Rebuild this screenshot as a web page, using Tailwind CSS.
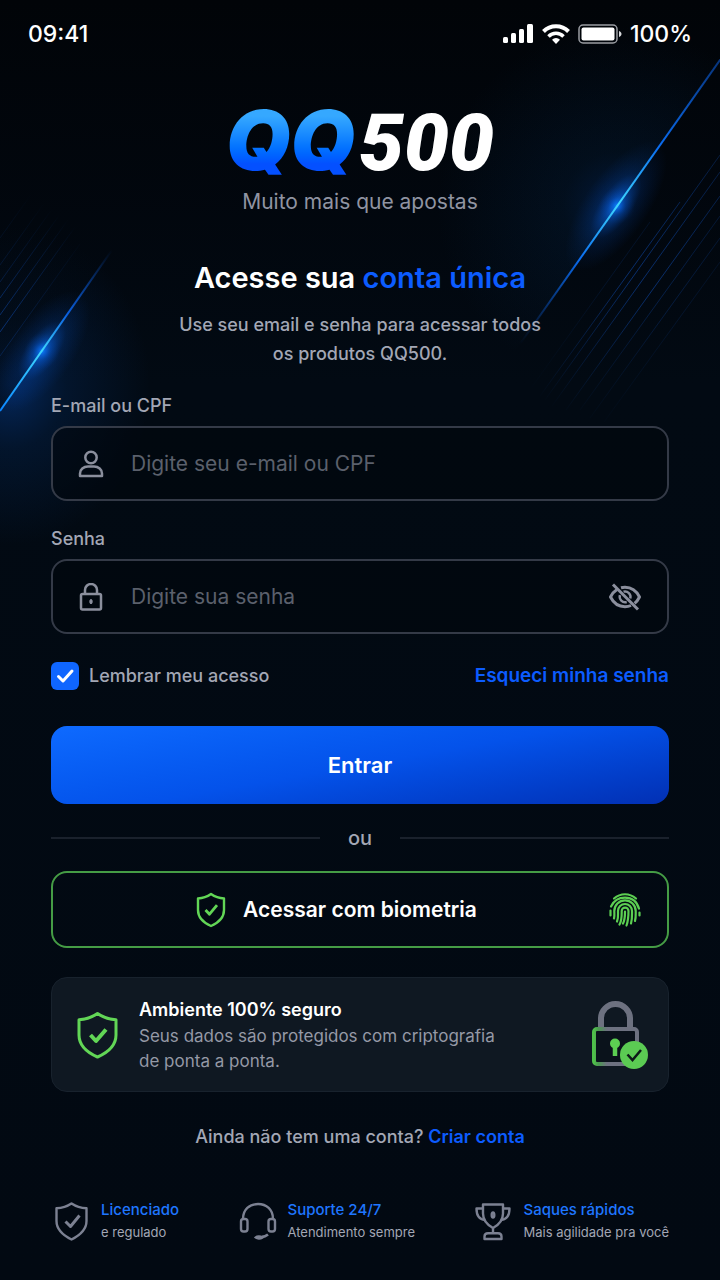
<!DOCTYPE html>
<html lang="pt-BR">
  <head>
    <meta charset="UTF-8" />
    <meta name="viewport" content="width=device-width, initial-scale=1.0" />
    <title>QQ500 - Entrar</title>
    <script src="https://cdn.jsdelivr.net/npm/@tailwindcss/browser@4"></script>
  </head>
  <body class="relative min-h-screen overflow-x-hidden bg-linear-to-b from-[#010408] via-[#020a13] via-30% to-[#020912] font-['Inter','Liberation_Sans',sans-serif] text-[#a3a7b5]">

    <!-- Background light streaks -->
    <svg class="absolute top-0 right-0 w-[360px] h-[480px] pointer-events-none" viewBox="360 0 360 480" fill="none" aria-hidden="true">
      <defs>
        <linearGradient id="streak-r" gradientUnits="userSpaceOnUse" x1="734" y1="40" x2="520" y2="344">
          <stop offset="0" stop-color="#0b4fc0" stop-opacity=".5" />
          <stop offset=".35" stop-color="#0a6cf0" />
          <stop offset=".54" stop-color="#3fd8ff" />
          <stop offset=".72" stop-color="#0a6cf0" />
          <stop offset="1" stop-color="#0b4fc0" stop-opacity="0" />
        </linearGradient>
        <linearGradient id="fine-r" gradientUnits="userSpaceOnUse" x1="720" y1="150" x2="540" y2="400">
          <stop offset="0" stop-color="#0d47a8" stop-opacity=".3" />
          <stop offset=".5" stop-color="#0d47a8" stop-opacity=".6" />
          <stop offset="1" stop-color="#0d47a8" stop-opacity="0" />
        </linearGradient>
        <radialGradient id="halo-r" gradientUnits="userSpaceOnUse" cx="0" cy="0" r="1" gradientTransform="translate(617 206) scale(180 180)">
          <stop offset="0" stop-color="#0640a0" stop-opacity=".35" />
          <stop offset=".3" stop-color="#05305c" stop-opacity=".2" />
          <stop offset="1" stop-color="#05305c" stop-opacity="0" />
        </radialGradient>
        <radialGradient id="flare">
          <stop offset="0" stop-color="#0f86ff" stop-opacity=".8" />
          <stop offset=".2" stop-color="#0766f0" stop-opacity=".5" />
          <stop offset=".5" stop-color="#0450c8" stop-opacity=".18" />
          <stop offset="1" stop-color="#0444b0" stop-opacity="0" />
        </radialGradient>
      </defs>
      <path d="M762 0 424 480H360V0Z" fill="url(#halo-r)" />
      <ellipse cx="616" cy="206" rx="76" ry="32" fill="url(#flare)" transform="rotate(-55 616 206)" />
      <circle cx="617" cy="206" r="18" fill="url(#flare)" />
      <path d="M734 40 520 344" stroke="url(#streak-r)" stroke-width="2" />
      <g stroke="url(#fine-r)" stroke-width="1">
        <path d="M680 202 540 396" />
        <path d="M720 155 545 400" />
        <path d="M720 172 552 406" />
        <path d="M720 196 566 410" />
        <path d="M720 216 580 410" opacity=".6" />
        <path d="M720 238 590 418" opacity=".5" />
        <path d="M720 262 604 422" opacity=".3" />
        <path d="M650 222 524 398" opacity=".3" />
      </g>
    </svg>
    <svg class="absolute top-0 left-0 w-[260px] h-[640px] pointer-events-none" viewBox="0 0 260 640" fill="none" aria-hidden="true">
      <defs>
        <linearGradient id="streak-l" gradientUnits="userSpaceOnUse" x1="0" y1="411" x2="112" y2="250">
          <stop offset="0" stop-color="#0a84ff" />
          <stop offset=".37" stop-color="#3fd8ff" />
          <stop offset=".6" stop-color="#0a5fe0" />
          <stop offset="1" stop-color="#0b4fc0" stop-opacity="0" />
        </linearGradient>
        <linearGradient id="fine-l" gradientUnits="userSpaceOnUse" x1="0" y1="330" x2="75" y2="225">
          <stop offset="0" stop-color="#0d47a8" stop-opacity=".6" />
          <stop offset="1" stop-color="#0d47a8" stop-opacity="0" />
        </linearGradient>
        <radialGradient id="halo-l" gradientUnits="userSpaceOnUse" cx="0" cy="0" r="1" gradientTransform="translate(10 385) scale(140 160)">
          <stop offset="0" stop-color="#0648b0" stop-opacity=".5" />
          <stop offset=".4" stop-color="#05306c" stop-opacity=".28" />
          <stop offset="1" stop-color="#05306c" stop-opacity="0" />
        </radialGradient>
      </defs>
      <path d="M0 411 140 210H260V640H0Z" fill="url(#halo-l)" />
      <path d="M0 411 140 210H0Z" fill="url(#halo-l)" opacity=".35" />
      <ellipse cx="42" cy="351" rx="70" ry="32" fill="url(#flare)" transform="rotate(-55 42 351)" />
      <circle cx="42" cy="351" r="18" fill="url(#flare)" />
      <path d="M0 411 112 250" stroke="url(#streak-l)" stroke-width="2" />
      <g stroke="url(#fine-l)" stroke-width="1">
        <path d="M0 238 40 182" opacity=".5" />
        <path d="M0 265 55 188" opacity=".6" />
        <path d="M0 282 62 195" opacity=".7" />
        <path d="M0 298 68 203" />
        <path d="M0 315 70 217" />
        <path d="M0 332 75 227" />
        <path d="M0 356 80 244" opacity=".5" />
      </g>
    </svg>

    <div class="relative">
      <!-- Status bar -->
      <header class="flex h-[68px] items-center justify-between px-7 text-[23px] font-medium text-white">
        <span>09:41</span>
        <div class="flex items-center gap-2">
          <svg class="h-5 w-8" viewBox="0 0 32 20" fill="currentColor" aria-hidden="true">
            <rect x="1" y="13" width="5" height="6" rx="1.500" />
            <rect x="9" y="9" width="5" height="10" rx="1.500" />
            <rect x="17" y="5" width="5" height="14" rx="1.500" />
            <rect x="25" y="0" width="6" height="19" rx="1.500" />
          </svg>
          <svg class="h-5 w-7" viewBox="0 0 28 20" fill="none" stroke="currentColor" stroke-width="4" aria-hidden="true">
            <path d="M1.500 7.500a17.500 17.500 0 0 1 25 0" />
            <path d="M6.500 12.500a10.500 10.500 0 0 1 15 0" stroke-width="3.500" />
            <path d="M14 20l-4-4.200a5.600 5.600 0 0 1 8 0Z" fill="currentColor" stroke="none" />
          </svg>
          <svg class="h-5 w-11" viewBox="0 0 44 20" fill="none" aria-hidden="true">
            <rect x="1" y="1" width="38" height="18" rx="4" stroke="#9a9da3" stroke-width="1.500" />
            <rect x="3.500" y="3.500" width="33" height="13" rx="2" fill="#fff" />
            <path d="M41 7c1.500.6 2.500 1.600 2.500 3s-1 2.400-2.500 3Z" fill="#d5d7da" />
          </svg>
          <span>100%</span>
        </div>
      </header>

      <main class="px-[51px] pb-9">
        <!-- Brand -->
        <div class="mt-8 text-center">
          <div class="flex h-20 items-baseline justify-center leading-20 font-black italic">
            <span class="bg-linear-to-b from-[#35a8ff] from-20% to-[#0450ff] to-80% bg-clip-text pr-1 text-[83px] text-transparent">QQ</span>
            <span class="font-['Roboto','Liberation_Sans',sans-serif] text-[80px] text-white">500</span>
          </div>
          <p class="mt-2 text-[21px] leading-7 text-[#9094a2]">Muito mais que apostas</p>
        </div>

        <div class="mt-[42px] text-center">
          <h1 class="text-[29px] leading-10 font-semibold text-white">Acesse sua <span class="text-[#0c5cff]">conta única</span></h1>
          <p class="mx-auto mt-3 max-w-[376px] text-lg leading-[29px] font-medium">Use seu email e senha para acessar todos os produtos QQ500.</p>
        </div>

        <form id="login-form" class="mt-[26px]">
          <label for="login" class="block text-lg leading-6 font-medium">E-mail ou CPF</label>
          <div class="mt-2 flex h-[75px] items-center rounded-2xl border-2 border-[#343a47] bg-[#02070e]/60 px-6">
            <svg class="size-7 shrink-0" viewBox="0 0 28 28" fill="none" stroke="#8b8f9d" stroke-width="2.500" stroke-linejoin="round" aria-hidden="true">
              <circle cx="14" cy="7.500" r="5.700" />
              <path d="M3 26v-2.500c0-4 3.500-7 8-7h6c4.500 0 8 3 8 7V26Z" />
            </svg>
            <input type="text" id="login" name="login" placeholder="Digite seu e-mail ou CPF" class="ml-[26px] h-full min-w-0 flex-1 bg-transparent text-[21px] text-white outline-none placeholder:text-[#5b606c]" />
          </div>

          <label for="senha" class="mt-[26px] block text-lg leading-6 font-medium">Senha</label>
          <div class="mt-2 flex h-[75px] items-center rounded-2xl border-2 border-[#343a47] bg-[#02070e]/60 px-6">
            <svg class="size-7 shrink-0" viewBox="0 0 28 28" fill="none" stroke="#8b8f9d" stroke-width="2.500" stroke-linejoin="round" aria-hidden="true">
              <rect x="4" y="11" width="20" height="15.500" rx="1.500" />
              <path d="M8 11V7a6 6 0 0 1 12 0v4" />
              <ellipse cx="14" cy="18.600" rx="1.200" ry="2.200" fill="#8b8f9d" stroke-width="1" />
            </svg>
            <input type="password" id="senha" name="senha" placeholder="Digite sua senha" class="ml-[26px] h-full min-w-0 flex-1 bg-transparent text-[21px] text-white outline-none placeholder:text-[#5b606c]" />
            <button type="button" id="toggle-senha" aria-label="Mostrar senha" class="mr-0.5 cursor-pointer">
              <svg class="h-7 w-8" viewBox="0 0 32 28" fill="none" stroke="#8b8f9d" stroke-width="3" aria-hidden="true">
                <path d="M12 4.800a15 15 0 0 1 4-.5c6.500 0 11.500 3.700 14.500 9.700-1.300 2.600-2.900 4.700-4.900 6.300" />
                <path d="M8 6.500C5.300 8.200 3.100 10.700 1.500 14c3 6 8 9.700 14.500 9.700 2.200 0 4.200-.4 6-1.200" />
                <path d="M14.500 8.700a5.500 5.500 0 0 1 6.800 6.800M10.900 12.200a5.500 5.500 0 0 0 6.800 6.800" stroke-width="2.400" />
                <path d="m4 1.500 25 25" />
              </svg>
            </button>
          </div>

          <div class="mt-7 flex items-center justify-between">
            <label for="lembrar" class="flex cursor-pointer items-center gap-2.5 text-lg leading-7 font-medium">
              <span class="grid size-7 place-items-center">
                <input type="checkbox" id="lembrar" name="lembrar" checked class="peer col-start-1 row-start-1 size-7 appearance-none rounded-md border-2 border-[#343a47] checked:border-0 checked:bg-[#0f66ff]" />
                <svg class="pointer-events-none col-start-1 row-start-1 hidden size-7 peer-checked:block" viewBox="0 0 28 28" fill="none" stroke="#fff" stroke-width="3" stroke-linecap="round" stroke-linejoin="round" aria-hidden="true">
                  <path d="m7.500 14.500 4.500 4.500 9-10" />
                </svg>
              </span>
              Lembrar meu acesso
            </label>
            <a href="#" class="text-[19px] leading-7 font-semibold text-[#0c5cff]">Esqueci minha senha</a>
          </div>

          <button type="submit" class="mt-9 h-[78px] w-full cursor-pointer rounded-2xl bg-linear-170 from-[#0e6aff] via-[#0452ea] to-[#0230b4] text-[22px] font-semibold text-white">Entrar</button>
        </form>

        <div class="mt-[22px] flex items-center gap-7 text-xl leading-6 font-medium">
          <span class="h-0.5 flex-1 bg-[#1a212c]"></span>
          ou
          <span class="h-0.5 flex-1 bg-[#1a212c]"></span>
        </div>

        <button type="button" class="mt-[21px] flex h-[77px] w-full cursor-pointer items-center justify-between rounded-2xl border-2 border-[#459c45] pr-[26px] pl-6 text-[21px] font-semibold text-white">
          <span class="flex flex-1 items-center justify-center gap-4 pr-3.5">
            <svg class="h-9 w-8" viewBox="0 0 32 36" fill="none" stroke="#62d656" stroke-width="2.400" stroke-linejoin="round" aria-hidden="true">
              <path d="M16 2c4 2.800 8 4.200 13 4.500V18c0 7-5 12.500-13 16C8 30.500 3 25 3 18V6.500C8 6.200 12 4.800 16 2Z" />
              <path d="m10.500 18 4 4.200 7.500-9" stroke-width="2.800" />
            </svg>
            Acessar com biometria
          </span>
          <svg class="h-9 w-8" viewBox="0 0 32 36" fill="none" stroke="#5ccf52" stroke-width="2.200" stroke-linecap="round" aria-hidden="true">
            <path d="M5 6.500C11.500.8 20.500.8 27 6.500" />
            <path d="M2 14.500C5 8 10 5.600 16 5.600c7 0 12 4 14 11" />
            <path d="M1.500 18.500v5M30.500 20.500v3" />
            <path d="M5 26.500c.7-3 .3-5 .3-7.500A10.700 10.700 0 0 1 26.700 19c0 4 .3 6-.7 10" />
            <path d="M8 29.500c1.500-3.500 1-7 1-10.500a7 7 0 0 1 14 0c0 5 .3 8-1 12.500" />
            <path d="M10.500 32.500c2.500-4 2.200-9 2.200-13.500a3.400 3.400 0 0 1 6.800 0c0 5-.2 9.500-2 14.500" />
            <path d="M16 19.500c0 5 0 8.500-2 12" />
          </svg>
        </button>

        <!-- Security notice -->
        <section class="mt-[29px] flex h-[115px] items-center rounded-2xl border border-[#18222d] bg-[#0f1822] pr-5 pl-6">
          <svg class="h-12 w-11 shrink-0" viewBox="0 0 44 48" fill="none" stroke="#62d656" stroke-width="3" stroke-linejoin="round" aria-hidden="true">
            <path d="M21.500 2.500c5.500 3.800 11 5.800 18.500 6.200V24c0 9.500-7 17-18.500 22C10 41 3 33.500 3 24V8.700c7.500-.4 13-2.400 18.500-6.200Z" />
            <path d="m14.500 24 5.500 6 10-11.500" stroke-width="4" />
          </svg>
          <div class="ml-[19px] flex-1 text-[17px] leading-[25px] text-[#9599a6]">
            <h2 class="text-lg leading-7 font-semibold text-white">Ambiente 100% seguro</h2>
            <p class="max-w-[380px]">Seus dados são protegidos com criptografia de ponta a ponta.</p>
          </div>
          <svg class="h-[68px] w-14 shrink-0" viewBox="0 0 56 68" fill="none" aria-hidden="true">
            <defs>
              <linearGradient id="lock-body" x1="0" y1="0" x2="1" y2="0">
                <stop offset="0" stop-color="#4fc04a" />
                <stop offset=".1" stop-color="#4a9a50" />
                <stop offset=".3" stop-color="#6d7180" />
                <stop offset="1" stop-color="#6d7180" />
              </linearGradient>
            </defs>
            <path d="M9 27V17.500a14.500 14.500 0 0 1 29 0V27" stroke="#6d7180" stroke-width="6" />
            <rect x="2" y="28" width="43" height="35" rx="3" fill="#0a121b" stroke="url(#lock-body)" stroke-width="4" />
            <circle cx="23" cy="42.500" r="5" fill="#5ccf52" />
            <path d="M23 43v12" stroke="#5ccf52" stroke-width="4.500" />
            <circle cx="42" cy="54" r="14" fill="#5bcb53" />
            <path d="m35.500 53.500 5 5.500 8.500-10" stroke="#0d1a18" stroke-width="2.500" />
          </svg>
        </section>

        <p class="mt-[31px] text-center text-lg leading-7 font-medium">Ainda não tem uma conta? <a href="#" class="font-semibold text-[#0c5cff]">Criar conta</a></p>

        <!-- Highlights -->
        <ul class="mt-12 flex justify-between text-[13px] leading-[22px]">
          <li class="flex items-center gap-2.5">
            <svg class="size-10" viewBox="0 0 40 40" fill="none" stroke="#7c8192" stroke-width="2.400" stroke-linejoin="round" aria-hidden="true">
              <path d="M20.500 2.500c4.500 3 9.500 4.500 15 4.800V20c0 8-6 14-15 18.500C11.500 34 5.500 28 5.500 20V7.300c5.500-.3 10.500-1.800 15-4.800Z" />
              <path d="m14.500 20.500 5 5 9-11" stroke-width="3" />
            </svg>
            <div>
              <h3 class="text-[15px] leading-[22px] font-medium text-[#1f76ff]">Licenciado</h3>
              <p>e regulado</p>
            </div>
          </li>
          <li class="flex items-center gap-2.5">
            <svg class="size-10" viewBox="0 0 40 40" fill="none" stroke="#7c8192" stroke-width="2.400" aria-hidden="true">
              <path d="M5 18C5 8.500 11.500 3 20 3s15 5.500 15 15" />
              <rect x="3" y="18" width="6.500" height="12.500" rx="2.500" />
              <rect x="30.500" y="18" width="6.500" height="12.500" rx="2.500" />
              <path d="M30 33.500c-2 1.500-3.500 2.300-6 2.500M18 36.500c1.500-1.500 4.500-1 6 0-1.500 1-4.500 1.200-6 0Z" stroke-width="2.800" />
            </svg>
            <div>
              <h3 class="text-[15px] leading-[22px] font-medium text-[#1f76ff]">Suporte 24/7</h3>
              <p>Atendimento sempre</p>
            </div>
          </li>
          <li class="flex items-center gap-2.5">
            <svg class="size-10" viewBox="0 0 40 40" fill="none" stroke="#7c8192" stroke-width="2.400" stroke-linejoin="round" aria-hidden="true">
              <path d="M10 3.500h20v9c0 6-3.500 11-10 14.500-6.500-3.500-10-8.500-10-14.500Z" />
              <path d="M10 7.500H3.500c0 7 2.500 11 8.500 11.500M30 7.500h6.500c0 7-2.500 11-8.500 11.500" />
              <path d="M20 27v5M11.500 38v-2.500c0-2 1.500-3.300 3.500-3.300h10c2 0 3.500 1.300 3.500 3.300V38Z" />
              <ellipse cx="20" cy="14" rx="1.300" ry="2.600" />
            </svg>
            <div>
              <h3 class="text-[15px] leading-[22px] font-medium text-[#1f76ff]">Saques rápidos</h3>
              <p>Mais agilidade pra você</p>
            </div>
          </li>
        </ul>
      </main>
    </div>

    <script>
      document.getElementById('toggle-senha').addEventListener('click', function() {
        const senha = document.getElementById('senha');
        senha.type = senha.type === 'password' ? 'text' : 'password';
      });

      document.getElementById('login-form').addEventListener('submit', function(event) {
        event.preventDefault();
      });
    </script>
  </body>
</html>
